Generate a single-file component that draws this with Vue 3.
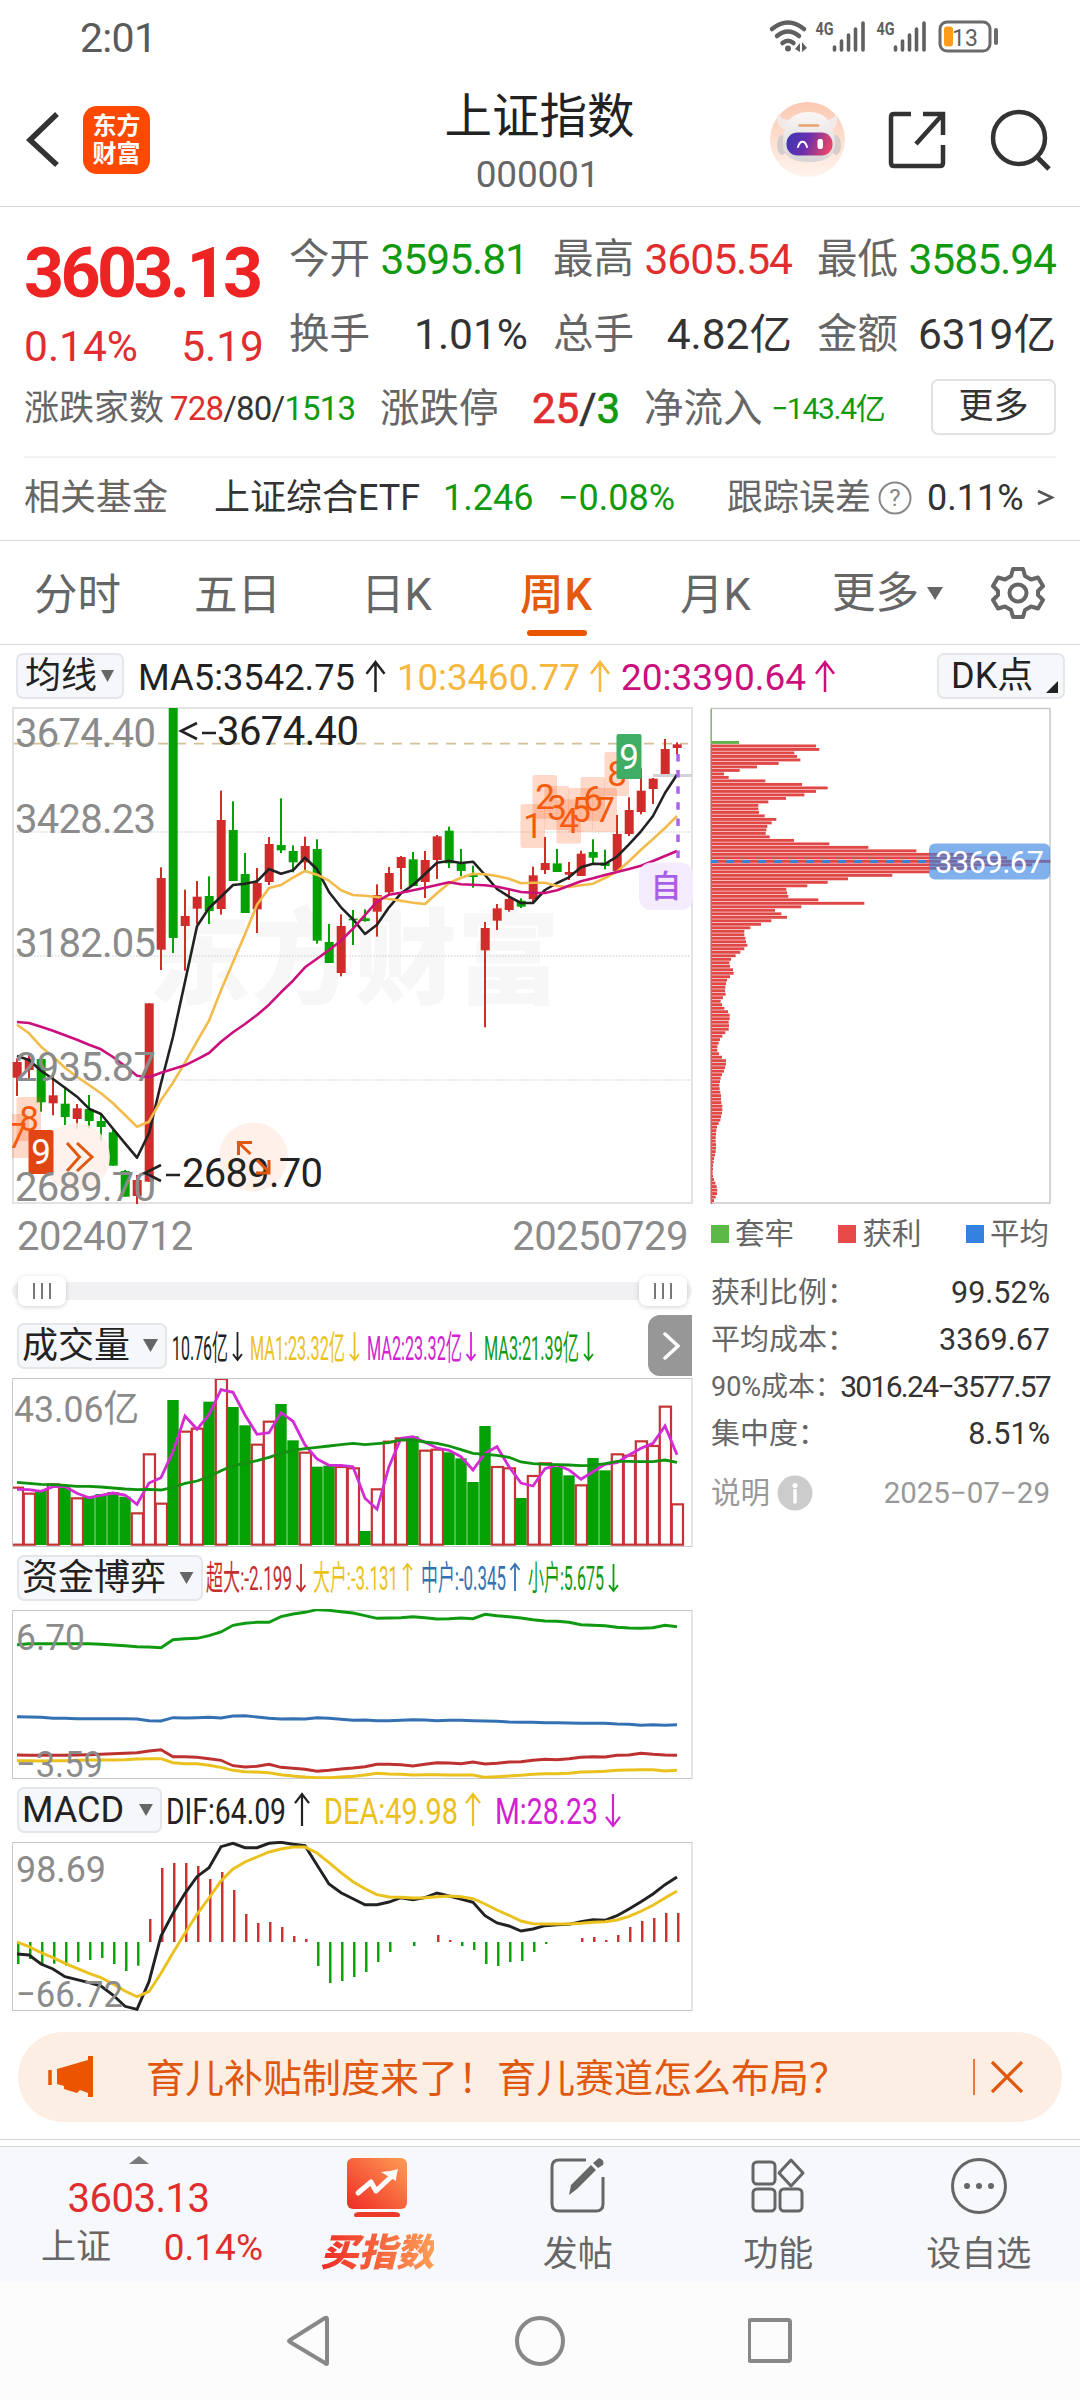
<script setup>
const quotes = [
    { label: "今开", value: "3595.81", tone: "down" },
    { label: "最高", value: "3605.54", tone: "up" },
    { label: "最低", value: "3585.94", tone: "down" },
    { label: "换手", value: "1.01%", tone: "" },
    { label: "总手", value: "4.82亿", tone: "" },
    { label: "金额", value: "6319亿", tone: "" },
]

const tabs = ["分时", "五日", "日K", "周K", "月K"]
const activeTab = "周K"

// one entry per week: color, high, open/close top, open/close bottom, low
const candles = [
    ["r", 1075, 1086, 1133, 1188], ["r", 1065, 1075, 1110, 1140], ["g", 1070, 1077, 1207, 1235], ["r", 1122, 1186, 1210, 1246],
    ["g", 1160, 1211, 1251, 1276], ["r", 1212, 1225, 1257, 1286], ["g", 1185, 1227, 1263, 1286], ["g", 1240, 1263, 1281, 1322],
    ["g", 1290, 1297, 1397, 1397], ["g", 1410, 1413, 1490, 1490], ["r", 1425, 1440, 1488, 1512], ["r", 910, 910, 1445, 1445],
    ["r", 502, 534, 749, 810], ["g", 24, 24, 714, 759], ["r", 569, 648, 678, 812], ["r", 543, 590, 626, 672],
    ["g", 529, 588, 633, 672], ["r", 272, 360, 627, 644], ["g", 304, 390, 543, 543], ["g", 459, 522, 639, 639],
    ["r", 504, 549, 628, 699], ["r", 411, 432, 546, 555], ["g", 295, 435, 451, 459], ["g", 436, 453, 487, 517],
    ["r", 410, 438, 487, 510], ["g", 418, 447, 722, 731], ["g", 672, 726, 789, 789], ["r", 643, 678, 819, 829],
    ["g", 630, 656, 661, 735], ["g", 628, 655, 663, 665], ["r", 553, 585, 635, 710], ["r", 501, 519, 577, 588],
    ["r", 468, 471, 504, 568], ["g", 456, 478, 558, 558], ["r", 453, 480, 546, 594], ["r", 405, 409, 480, 537],
    ["g", 380, 392, 490, 504], ["g", 447, 490, 513, 528], ["g", 497, 525, 531, 563], ["r", 666, 684, 751, 982],
    ["r", 612, 625, 662, 690], ["r", 565, 597, 630, 635], ["g", 595, 602, 620, 624], ["r", 500, 526, 597, 612],
    ["r", 411, 489, 510, 522], ["g", 447, 490, 516, 516], ["r", 486, 516, 524, 540], ["r", 452, 461, 528, 528],
    ["g", 418, 456, 473, 490], ["g", 449, 488, 498, 508], ["r", 345, 402, 513, 513], ["r", 292, 330, 402, 408],
    ["r", 205, 272, 336, 343], ["r", 234, 236, 267, 312], ["r", 117, 147, 222, 222], ["r", 127, 133, 144, 163],
]
const ma5 = [1068, 1080, 1112, 1137, 1163, 1190, 1226, 1242, 1286, 1330, 1373, 1300, 1150, 1010, 845, 679, 624, 590, 555, 551, 544, 507, 521, 511, 473, 508, 576, 622, 658, 702, 674, 622, 580, 555, 522, 488, 483, 489, 485, 525, 567, 590, 609, 609, 570, 549, 532, 502, 491, 492, 470, 433, 394, 348, 279, 224]
const ma10 = [974, 1000, 1040, 1070, 1103, 1130, 1155, 1180, 1210, 1245, 1280, 1265, 1200, 1148, 1088, 1024, 962, 871, 787, 703, 614, 564, 555, 533, 513, 524, 542, 571, 585, 587, 591, 597, 602, 608, 612, 580, 550, 533, 521, 523, 528, 536, 550, 548, 548, 558, 561, 556, 551, 534, 515, 484, 449, 417, 384, 348]
const ma20 = [966, 969, 980, 992, 1006, 1019, 1034, 1048, 1071, 1098, 1127, 1132, 1118, 1107, 1096, 1078, 1059, 1025, 997, 972, 945, 914, 877, 842, 802, 776, 750, 722, 686, 645, 605, 584, 578, 571, 563, 555, 547, 553, 554, 556, 560, 568, 576, 578, 579, 571, 557, 544, 535, 525, 516, 507, 497, 483, 468, 453]

// nine-turn counters above the candles
const turns = [
    { n: 1, x: 520.5, y: 804 }, { n: 2, x: 532.5, y: 775 }, { n: 3, x: 544.5, y: 786 }, { n: 4, x: 556.5, y: 799.5 },
    { n: 5, x: 568.5, y: 788 }, { n: 6, x: 580.5, y: 777 }, { n: 7, x: 592.5, y: 788 }, { n: 8, x: 604.5, y: 752 },
    { n: 7, x: 4.5, y: 1114 }, { n: 8, x: 16.5, y: 1097 },
]

const volumes = [
    ["r", 860], ["r", 878], ["g", 870], ["r", 850], ["g", 862], ["r", 892], ["g", 890], ["g", 882], ["g", 876], ["g", 890],
    ["r", 937], ["r", 760], ["r", 908], ["g", 600], ["r", 692], ["r", 683], ["g", 605], ["r", 534], ["g", 621], ["g", 676],
    ["r", 731], ["r", 662], ["g", 612], ["g", 721], ["r", 755], ["g", 800], ["g", 797], ["r", 798], ["r", 802], ["g", 993],
    ["r", 865], ["r", 722], ["r", 712], ["g", 709], ["r", 749], ["r", 746], ["g", 757], ["g", 775], ["g", 846], ["g", 678],
    ["r", 798], ["r", 802], ["g", 894], ["r", 825], ["r", 787], ["g", 801], ["g", 826], ["r", 853], ["g", 774], ["g", 811],
    ["r", 760], ["r", 764], ["r", 721], ["r", 735], ["r", 617], ["r", 910],
]
const volFast = [868, 869, 874, 860, 860, 880, 893, 886, 879, 885, 913, 849, 833, 755, 648, 688, 644, 569, 577, 645, 703, 698, 638, 664, 735, 777, 796, 796, 800, 895, 928, 800, 715, 710, 727, 744, 751, 770, 810, 760, 740, 800, 849, 858, 806, 795, 810, 838, 815, 793, 788, 765, 745, 730, 678, 764]
const volSlow = [847, 850, 853, 854, 856, 859, 859, 861, 864, 867, 869, 868, 870, 862, 850, 843, 830, 812, 797, 790, 782, 772, 760, 751, 746, 742, 738, 734, 730, 734, 731, 728, 720, 720, 726, 730, 738, 749, 760, 763, 766, 772, 786, 791, 793, 794, 795, 797, 796, 791, 784, 784, 785, 785, 780, 787]

const fundLines = [
    { color: "#0f9a12", data: [314, 311, 311, 311, 311, 311, 311, 313, 315, 317, 320, 321, 323, 299, 296, 295, 287, 276, 256, 250, 247, 247, 230, 222, 217, 209, 211, 215, 219, 227, 235, 234, 233, 230, 233, 237, 236, 234, 236, 223, 227, 230, 234, 239, 243, 244, 247, 254, 256, 257, 262, 264, 265, 263, 256, 260] },
    { color: "#3471b3", data: [530, 531, 532, 535, 535, 536, 536, 536, 536, 536, 537, 542, 543, 533, 534, 533, 532, 534, 528, 527, 531, 535, 537, 536, 537, 533, 535, 538, 541, 540, 542, 542, 541, 539, 540, 542, 541, 541, 542, 543, 544, 546, 547, 547, 548, 548, 549, 550, 550, 550, 552, 553, 556, 554, 556, 554] },
    { color: "#bd3130", data: [645, 646, 646, 646, 646, 645, 644, 643, 641, 640, 638, 633, 629, 650, 650, 652, 656, 661, 677, 681, 679, 673, 682, 685, 688, 694, 691, 687, 684, 680, 673, 673, 674, 678, 673, 668, 669, 671, 666, 672, 670, 666, 665, 661, 658, 659, 656, 652, 650, 651, 646, 645, 640, 643, 645, 646] },
    { color: "#ebc11d", data: [662, 662, 663, 662, 662, 661, 660, 660, 660, 659, 657, 656, 656, 668, 671, 671, 676, 682, 691, 695, 696, 698, 704, 708, 711, 713, 713, 711, 709, 705, 700, 702, 703, 705, 704, 704, 705, 705, 705, 712, 710, 708, 706, 703, 701, 701, 700, 696, 695, 694, 691, 690, 689, 689, 693, 691] },
]

const macdZero = 486
const macd = [552, 537, 552, 551, 557, 546, 540, 534, 552, 573, 557, 417, 264, 249, 249, 258, 297, 276, 330, 402, 429, 426, 441, 468, 477, 558, 609, 603, 591, 576, 546, 516, 486, 498, 486, 465, 480, 498, 510, 552, 558, 546, 543, 516, 492, 486, 486, 474, 471, 480, 465, 441, 423, 414, 399, 399]
const dif = [522, 525, 552, 567, 590, 599, 608, 618, 645, 679, 688, 605, 468, 400, 340, 290, 263, 200, 190, 203, 203, 190, 187, 193, 197, 255, 312, 338, 356, 374, 374, 366, 353, 359, 353, 339, 348, 357, 367, 407, 429, 438, 453, 447, 437, 434, 433, 425, 419, 421, 407, 387, 365, 342, 314, 291]
const dea = [486, 500, 518, 533, 550, 565, 580, 593, 612, 633, 650, 635, 580, 518, 460, 403, 354, 303, 267, 246, 231, 216, 207, 201, 201, 219, 248, 278, 305, 326, 344, 351, 352, 354, 353, 350, 348, 350, 356, 372, 390, 406, 423, 431, 432, 432, 432, 430, 427, 425, 420, 409, 394, 376, 354, 333]

// chip distribution, top price first
const chips = [
    146, 377, 387, 312, 320, 330, 265, 200, 148, 101, 115, 225, 335, 412, 377, 342, 287, 234, 204, 204, 206, 223, 258, 244, 231, 228, 226, 238,
    311, 417, 534, 678, 858, 950, 1080, 1025, 860, 717, 606, 473, 412, 351, 288, 290, 294, 384, 522, 333, 254, 273, 290, 243, 212, 180, 162, 162,
    165, 167, 171, 162, 150, 136, 122, 117, 119, 128, 130, 119, 110, 107, 105, 104, 106, 98, 91, 95, 102, 113, 118, 118, 115, 116, 115, 105, 96,
    89, 85, 81, 81, 86, 95, 107, 107, 104, 101, 95, 91, 89, 87, 88, 90, 92, 92, 93, 96, 96, 95, 92, 90, 85, 80, 78, 77, 76, 76, 77, 77, 76, 74,
    71, 70, 68, 68, 67, 68, 71, 75, 79, 81, 80, 76, 71, 66,
]

const maLegend = [
    { text: "MA5:3542.75", x: 138, w: 217, arrow: 375.5, up: true, color: "#222" },
    { text: "10:3460.77", x: 397, w: 183, arrow: 600, up: true, color: "#f5b73c" },
    { text: "20:3390.64", x: 621, w: 185, arrow: 825, up: true, color: "#cb0f7c" },
]
const volLegend = [
    { text: "10.76亿", x: 172, w: 56, arrow: 237.5, color: "#222" },
    { text: "MA1:23.32亿", x: 250, w: 95, arrow: 354.5, color: "#ebc11d" },
    { text: "MA2:23.32亿", x: 367, w: 95, arrow: 471, color: "#d222d2" },
    { text: "MA3:21.39亿", x: 484, w: 95, arrow: 588.5, color: "#0f9a12" },
]
const fundLegend = [
    { text: "超大:-2.199", x: 206, w: 86, arrow: 301, color: "#c52f2f" },
    { text: "大户:-3.131", x: 313, w: 85, arrow: 407.5, up: true, color: "#ebc11d" },
    { text: "中户:-0.345", x: 421, w: 85, arrow: 515, up: true, color: "#3471b3" },
    { text: "小户:5.675", x: 528, w: 76, arrow: 613.5, color: "#0f9a12" },
]
const macdLegend = [
    { text: "DIF:64.09", x: 166, w: 120, arrow: 302, up: true, color: "#222" },
    { text: "DEA:49.98", x: 324, w: 134, arrow: 473, up: true, color: "#ebc11d" },
    { text: "M:28.23", x: 495, w: 103, arrow: 613, color: "#d222d2" },
]

const stats = [
    { label: "获利比例：", value: "99.52%" },
    { label: "平均成本：", value: "3369.67" },
    { label: "90%成本：", value: "3016.24−3577.57", tight: true },
    { label: "集中度：", value: "8.51%" },
]

const px = (i) => 17 + 12 * i
const line = (data, base) => data.map((v, i) => `${px(i)},${(base + v / 3).toFixed(1)}`).join(" ")
const fill = (c) => c === "r" ? "#cf2d2c" : "#03a103"
const chipY = (i) => 741 + i * 3.497
const arrow = (item, top, bottom, spread) => {
    const tip = item.up ? top : bottom
    const back = item.up ? tip + spread * 1.3 : tip - spread * 1.3
    return `M${item.arrow} ${top}V${bottom}M${item.arrow - spread} ${back}L${item.arrow} ${tip}L${item.arrow + spread} ${back}`
}
</script>

<template>
    <div class="page">
        <div class="status">
            <span class="clock">2:01</span>
            <svg class="status-icons" width="232" height="36" viewBox="768 19 232 36">
                <g fill="none" stroke="#606060" stroke-width="4.5" stroke-linecap="round">
                    <path d="M772 29Q788 16 804 29" />
                    <path d="M777 36Q788 27 799 36" />
                    <path d="M782.500 43Q788 38.500 793.500 43" />
                </g>
                <circle cx="788" cy="48.500" r="3" fill="#606060" />
                <path d="M795 49L800 43V52ZM802 42L807 48L802 52Z" fill="#606060" />
                <text x="815.500" y="34.500" class="net" textLength="18" lengthAdjust="spacingAndGlyphs">4G</text>
                <text x="876.500" y="34.500" class="net" textLength="18" lengthAdjust="spacingAndGlyphs">4G</text>
                <path d="M834.500 47V50M841.500 41V50M848.500 35V50M855.500 29V50M863 23V50M895.500 47V50M902.500 41V50M909.500 35V50M916.500 29V50M924 23V50" stroke="#606060" stroke-width="3.600" stroke-linecap="round" />
                <rect x="940" y="22" width="50" height="29" rx="7" fill="none" stroke="#6b6b6b" stroke-width="3" />
                <rect x="944" y="26.500" width="9" height="20" rx="3" fill="#ff9d1b" />
                <path d="M996 30V43" stroke="#6b6b6b" stroke-width="4" stroke-linecap="round" />
                <text x="952" y="45.500" class="battery">13</text>
            </svg>
        </div>

        <header class="header">
            <div class="header-left">
                <svg width="36" height="60" viewBox="0 0 36 60"><path d="M32 4L5 30L32 55" fill="none" stroke="#333" stroke-width="5.500" /></svg>
                <div class="logo"><span>东方</span><span>财富</span></div>
            </div>
            <div class="title">
                <h1>上证指数</h1>
                <p>000001</p>
            </div>
            <div class="header-right">
                <svg width="76" height="76" viewBox="0 0 76 76">
                    <defs>
                        <linearGradient id="halo" x1="0" y1="0" x2="0" y2="1"><stop offset="0" stop-color="#fbc9b2" /><stop offset="1" stop-color="#fff4ee" /></linearGradient>
                        <linearGradient id="visor" x1="0" y1="0" x2="1" y2="0.200"><stop offset="0" stop-color="#3a37b0" /><stop offset=".5" stop-color="#6a2fae" /><stop offset="1" stop-color="#e0446c" /></linearGradient>
                        <linearGradient id="shell" x1="0" y1="0" x2="0" y2="1"><stop offset="0" stop-color="#fbf7f6" /><stop offset="1" stop-color="#d8d4d6" /></linearGradient>
                    </defs>
                    <circle cx="37.500" cy="37.500" r="37.500" fill="url(#halo)" />
                    <ellipse cx="12" cy="43" rx="5" ry="10" fill="#d6cdcb" />
                    <ellipse cx="66" cy="43" rx="5" ry="10" fill="#d6cdcb" />
                    <path d="M15 28Q4 22 8 12Q12 18 21 18ZM62 28Q70 22 66 12Q63 18 55 18Z" fill="#f3e9e6" />
                    <path d="M13 42C13 22 20 10 39 10S64 24 65 42C65 54 55 60 40 60S13 56 13 42Z" fill="url(#shell)" />
                    <rect x="16.500" y="30.500" width="46" height="23" rx="11" fill="url(#visor)" />
                    <path d="M28 45C30 38 35 38 37 45" fill="none" stroke="#fff" stroke-width="2" stroke-linecap="round" />
                    <rect x="47.500" y="37" width="5.500" height="10" rx="2.200" fill="#fff" />
                    <path d="M29.500 23.500H48" stroke="#e8a06a" stroke-width="2.500" stroke-linecap="round" />
                </svg>
                <svg width="60" height="60" viewBox="0 0 60 60"><path d="M24 4H7Q4 4 4 7V53Q4 56 7 56H53Q56 56 56 53V35M36 4H56V25M56 4L29 34" fill="none" stroke="#333" stroke-width="4.500" /></svg>
                <svg width="62" height="62" viewBox="0 0 62 62"><circle cx="29" cy="29" r="26" fill="none" stroke="#333" stroke-width="4.500" /><path d="M47 48L59 60" stroke="#333" stroke-width="5" /></svg>
            </div>
        </header>

        <section class="overview">
            <div class="price-row">
                <div class="price">
                    <strong>3603.13</strong>
                    <div class="change"><span>0.14%</span><span>5.19</span></div>
                </div>
                <div class="quotes">
                    <div v-for="q in quotes" :key="q.label" class="quote">
                        <span>{{ q.label }}</span>
                        <b :class="q.tone">{{ q.value }}</b>
                    </div>
                </div>
            </div>
            <div class="breadth">
                <span class="breadth-label">涨跌家数</span>
                <span class="counts"><i class="up">728</i>/80/<i class="down">1513</i></span>
                <span class="limit-label">涨跌停</span>
                <span class="limits"><i class="up">25</i>/<i class="down">3</i></span>
                <span class="flow-label">净流入</span>
                <span class="flow down">−143.4亿</span>
                <button class="more">更多</button>
            </div>
            <div class="fund">
                <span class="fund-label">相关基金</span>
                <span class="fund-name">上证综合ETF</span>
                <span class="fund-price down">1.246</span>
                <span class="fund-change down">−0.08%</span>
                <span class="fund-error">跟踪误差</span>
                <svg width="34" height="34" viewBox="0 0 34 34"><circle cx="17" cy="17" r="15.500" fill="none" stroke="#888" stroke-width="2" /><text x="17" y="25" class="help" text-anchor="middle">?</text></svg>
                <span class="fund-rate">0.11%</span>
                <svg class="fund-go" width="18" height="18" viewBox="0 0 18 18"><path d="M1 2L15 8.500L1 15" fill="none" stroke="#555" stroke-width="2.500" /></svg>
            </div>
        </section>

        <nav class="tabs">
            <span v-for="t in tabs" :key="t" class="tab" :class="{ active: t === activeTab }">{{ t }}</span>
            <span class="tab tab-more">更多<svg width="16" height="13" viewBox="0 0 16 13"><path d="M0 0H16L8 13Z" fill="#666" /></svg></span>
            <svg class="gear" width="54" height="54" viewBox="0 0 54 54">
                <path d="M22 3H32L34 10L40 13.500L47 11.500L52 20L47 25V29L52 34L47 42.500L40 40.500L34 44L32 51H22L20 44L14 40.500L7 42.500L2 34L7 29V25L2 20L7 11.500L14 13.500L20 10Z" fill="none" stroke="#666" stroke-width="4" stroke-linejoin="round" />
                <circle cx="27" cy="27" r="8.500" fill="none" stroke="#666" stroke-width="4" />
            </svg>
        </nav>

        <div class="ma-row">
            <button class="pick pick-ma">均线<svg width="13" height="12" viewBox="0 0 13 12"><path d="M0 0H13L6.500 12Z" fill="#666" /></svg></button>
            <svg width="813" height="62" viewBox="124 0 813 62">
                <g v-for="l in maLegend" :key="l.text">
                    <text :x="l.x" y="45" :fill="l.color" :textLength="l.w" lengthAdjust="spacingAndGlyphs" class="legend-37">{{ l.text }}</text>
                    <path :d="arrow(l, 17, 47, 9)" :stroke="l.color" fill="none" stroke-width="2.500" />
                </g>
            </svg>
            <button class="pick pick-dk">DK点<svg width="12" height="12" viewBox="0 0 12 12"><path d="M12 0V12H0Z" fill="#222" /></svg></button>
        </div>

        <main class="board">
            <div class="charts">
                <svg class="chart" width="682" height="497" viewBox="12 707 682 497">
                    <text x="148" y="996" class="watermark" textLength="412" lengthAdjust="spacingAndGlyphs">东方财富</text>
                    <path d="M13 832H692M13 956H692M13 1080H692" stroke="#dcdcdc" stroke-width="1.500" stroke-dasharray="1.500 1.500" />
                    <rect x="13" y="708" width="679" height="495" fill="none" stroke="#e3e3e3" stroke-width="2" />
                    <path d="M13 743.700H688" stroke="#d3c096" stroke-width="1.700" stroke-dasharray="10 8" stroke-dashoffset="-1" />
                    <path d="M653 775.500H692" stroke="#cfd3d8" stroke-width="3" />
                    <g v-for="(c, i) in candles" :key="i" :fill="fill(c[0])">
                        <rect :x="px(i) - 1" :y="700 + c[1] / 3" width="2" :height="(c[4] - c[1]) / 3" />
                        <rect :x="px(i) - 4.300" :y="700 + c[2] / 3" width="9" :height="(c[3] - c[2]) / 3" />
                    </g>
                    <g class="turn">
                        <g v-for="(t, i) in turns" :key="i">
                            <rect :x="t.x" :y="t.y" width="24.500" height="44" rx="2" fill="#fa6a2c" fill-opacity=".26" />
                            <text :x="t.x + 12.500" :y="t.y + 33.500" fill="#f45a0c" text-anchor="middle">{{ t.n }}</text>
                        </g>
                        <rect x="616.500" y="734" width="25" height="45" rx="2" fill="#3fae64" />
                        <text x="629" y="769" fill="#fff" text-anchor="middle">9</text>
                    </g>
                    <circle cx="76" cy="1157" r="34" fill="#fff0e9" fill-opacity=".85" />
                    <circle cx="253.500" cy="1157" r="34.500" fill="#fff0e9" />
                    <g class="turn">
                        <rect x="28.500" y="1130" width="25" height="44" rx="2" fill="#e14514" />
                        <text x="41" y="1164" fill="#fff" text-anchor="middle">9</text>
                    </g>
                    <g fill="none" stroke-width="2.600" stroke-linejoin="round">
                        <polyline :points="line(ma5, 700)" stroke="#222" />
                        <polyline :points="line(ma10, 700)" stroke="#f3bb4b" />
                        <polyline :points="line(ma20, 700)" stroke="#cb0f7c" />
                    </g>
                    <g class="axis">
                        <text x="15" y="746.500" textLength="141">3674.40</text>
                        <text x="15" y="832.500" textLength="141">3428.23</text>
                        <text x="15" y="957" textLength="141">3182.05</text>
                        <text x="15" y="1081" textLength="141">2935.87</text>
                        <text x="15" y="1201" textLength="141">2689.70</text>
                    </g>
                    <path d="M197 723L181 731L197 739M202 733H216M161 1165L145 1173L161 1181M166 1175H180" fill="none" stroke="#222" stroke-width="2.600" />
                    <text x="217" y="745" class="mark" textLength="142">3674.40</text>
                    <text x="182" y="1187" class="mark" textLength="141">2689.70</text>
                    <path d="M67 1143L79.500 1157L67 1171M77 1143L92 1157L77 1171M250.500 1154L238.500 1142.500M238.500 1155V1142.500H252M257 1160L269 1172M269 1160V1173H256" fill="none" stroke="#e0580f" stroke-width="3" />
                    <path d="M678 754V858" stroke="#ae62ea" stroke-width="3.500" stroke-dasharray="7.500 8.600" />
                    <rect x="639" y="862.500" width="54" height="47.500" rx="12" fill="#f3e9fd" fill-opacity=".9" />
                    <text x="666" y="897" class="auto" text-anchor="middle">自</text>
                </svg>

                <div class="dates"><span>20240712</span><span>20250729</span></div>

                <div class="slider">
                    <div class="handle"><i></i><i></i><i></i></div>
                    <div class="handle"><i></i><i></i><i></i></div>
                </div>

                <div class="row vol-row">
                    <button class="pick pick-vol">成交量<svg width="15" height="13" viewBox="0 0 15 13"><path d="M0 0H15L7.500 13Z" fill="#666" /></svg></button>
                    <svg width="481" height="63" viewBox="167 0 481 63">
                        <g v-for="l in volLegend" :key="l.text">
                            <text :x="l.x" y="45.500" :fill="l.color" :textLength="l.w" lengthAdjust="spacingAndGlyphs" class="legend-33">{{ l.text }}</text>
                            <path :d="arrow(l, 18, 46, 4.500)" :stroke="l.color" fill="none" stroke-width="1.800" />
                        </g>
                    </svg>
                    <button class="expand"><svg width="20" height="30" viewBox="0 0 20 30"><path d="M5 3L18 15L5 27" fill="none" stroke="#fff" stroke-width="3.500" stroke-linecap="round" /></svg></button>
                </div>
                <svg class="chart" width="682" height="170" viewBox="12 1377 682 170">
                    <text x="14" y="1422" class="sub" textLength="125" lengthAdjust="spacingAndGlyphs">43.06亿</text>
                    <svg class="clip" x="12" y="1378" width="680" height="169" viewBox="12 1378 680 169">
                        <template v-for="(v, i) in volumes" :key="i">
                            <rect v-if="v[0] === 'g'" :x="px(i) - 5.700" :y="1200 + v[1] / 3" width="11.400" :height="(1035 - v[1]) / 3" fill="#03a103" />
                            <rect v-else :x="px(i) - 5.200" :y="1201 + v[1] / 3" width="11.200" :height="(1031 - v[1]) / 3" fill="#fff" stroke="#c53434" stroke-width="2.200" />
                        </template>
                    </svg>
                    <polyline :points="line(volFast, 1200)" fill="none" stroke="#d42bd4" stroke-width="2.800" />
                    <polyline :points="line(volSlow, 1200)" fill="none" stroke="#0f930f" stroke-width="2.800" />
                    <rect x="12.500" y="1378.500" width="679.500" height="168" fill="none" stroke="#c9c9c9" />
                </svg>

                <div class="row">
                    <button class="pick pick-fund">资金博弈<svg width="15" height="12" viewBox="0 0 15 13"><path d="M0 0H15L7.500 13Z" fill="#666" /></svg></button>
                    <svg width="479" height="62" viewBox="203 0 479 62">
                        <g v-for="l in fundLegend" :key="l.text">
                            <text :x="l.x" y="43" :fill="l.color" :textLength="l.w" lengthAdjust="spacingAndGlyphs" class="legend-33">{{ l.text }}</text>
                            <path :d="arrow(l, 17, 44, 4.500)" :stroke="l.color" fill="none" stroke-width="1.800" />
                        </g>
                    </svg>
                </div>
                <svg class="chart" width="682" height="170" viewBox="12 1609 682 170">
                    <rect x="12.500" y="1610.500" width="679.500" height="168" fill="none" stroke="#c9c9c9" />
                    <polyline v-for="l in fundLines" :key="l.color" :points="line(l.data, 1540)" fill="none" :stroke="l.color" stroke-width="2.900" />
                    <text x="16" y="1650" class="sub" textLength="69" lengthAdjust="spacingAndGlyphs">6.70</text>
                    <text x="16" y="1777" class="sub" textLength="87" lengthAdjust="spacingAndGlyphs">−3.59</text>
                </svg>

                <div class="row">
                    <button class="pick pick-macd">MACD<svg width="14" height="12" viewBox="0 0 15 13"><path d="M0 0H15L7.500 13Z" fill="#666" /></svg></button>
                    <svg width="520" height="62" viewBox="162 0 520 62">
                        <g v-for="l in macdLegend" :key="l.text">
                            <text :x="l.x" y="45" :fill="l.color" :textLength="l.w" lengthAdjust="spacingAndGlyphs" class="legend-37">{{ l.text }}</text>
                            <path :d="arrow(l, 15, 47, 7)" :stroke="l.color" fill="none" stroke-width="2.200" />
                        </g>
                    </svg>
                </div>
                <svg class="chart" width="682" height="170" viewBox="12 1841 682 170">
                    <rect x="12.500" y="1842.500" width="679.500" height="168" fill="none" stroke="#c9c9c9" />
                    <rect v-for="(v, i) in macd" :key="i" :x="px(i)" :y="1780 + Math.min(v, macdZero) / 3" width="2.500" :height="Math.abs(v - macdZero) / 3" :fill="v < macdZero ? '#c93333' : '#10a010'" />
                    <polyline :points="line(dif, 1780)" fill="none" stroke="#222" stroke-width="2.900" />
                    <polyline :points="line(dea, 1780)" fill="none" stroke="#ebc11d" stroke-width="2.900" />
                    <text x="16" y="1882" class="sub" textLength="90" lengthAdjust="spacingAndGlyphs">98.69</text>
                    <text x="16" y="2007" class="sub" textLength="107" lengthAdjust="spacingAndGlyphs">−66.72</text>
                </svg>
            </div>

            <aside class="chips">
                <svg class="chart" width="342" height="497" viewBox="710 707 342 497">
                    <rect x="711" y="708.500" width="339" height="494.500" fill="none" stroke="#c8c8c8" stroke-width="1.500" />
                    <path d="M711.300 709V741" stroke="#7fb56a" stroke-width="1.200" />
                    <rect v-for="(c, i) in chips" :key="i" x="711" :y="chipY(i)" :width="(c - 62) / 3" height="2.900" :fill="i ? '#e04848' : '#62b24c'" />
                    <path d="M711.300 744V1203" stroke="#d86060" stroke-width="1.200" />
                    <path d="M711 861.500H929" stroke="#3f7fd6" stroke-width="3" stroke-dasharray="8 8" stroke-dashoffset="1" />
                    <rect x="929" y="843.500" width="121" height="36" rx="6" fill="#3481e0" fill-opacity=".62" />
                    <text x="935" y="873" class="avg" textLength="109">3369.67</text>
                </svg>
                <div class="keys">
                    <span><i class="sq green"></i>套牢</span>
                    <span><i class="sq red"></i>获利</span>
                    <span><i class="sq blue"></i>平均</span>
                </div>
                <div v-for="s in stats" :key="s.label" class="stat" :class="{ tight: s.tight }">
                    <span>{{ s.label }}</span><b>{{ s.value }}</b>
                </div>
                <div class="note">
                    <span>说明</span>
                    <svg width="36" height="36" viewBox="0 0 36 36"><circle cx="18" cy="18" r="17.500" fill="#ccc" /><circle cx="18" cy="10.500" r="2.500" fill="#fff" /><path d="M18 15.500V27" stroke="#fff" stroke-width="3.500" stroke-linecap="round" /></svg>
                    <time>2025−07−29</time>
                </div>
            </aside>
        </main>

        <div class="banner">
            <svg width="46" height="42" viewBox="0 0 46 42"><path d="M2 14V29" stroke="#eb5500" stroke-width="3.500" /><path d="M9 13L40 4V0H45V41H40V37L32 34L29 37L16 33V30L9 28Z" fill="#eb5500" /></svg>
            <p>育儿补贴制度来了！育儿赛道怎么布局？</p>
            <i></i>
            <svg width="34" height="34" viewBox="0 0 34 34"><path d="M2 2L32 32M32 2L2 32" stroke="#e0580f" stroke-width="3.200" /></svg>
        </div>

        <footer class="footer">
            <div class="index">
                <svg width="20" height="8" viewBox="0 0 20 8"><path d="M10 0L20 8H0Z" fill="#7b7b7e" /></svg>
                <strong>3603.13</strong>
                <div><span>上证</span><em>0.14%</em></div>
            </div>
            <div class="action buy">
                <svg width="62" height="62" viewBox="0 0 62 62">
                    <defs><linearGradient id="buy" x1="0" y1="1" x2="1" y2="0"><stop offset="0" stop-color="#ee2b25" /><stop offset="1" stop-color="#ff9d55" /></linearGradient></defs>
                    <rect x="1" y="3" width="60" height="51" rx="6" fill="url(#buy)" />
                    <path d="M8 60Q8 57 14 57H48Q54 57 54 60Q54 63 48 63H14Q8 63 8 60Z" fill="#ec3a2b" />
                    <path d="M12 38L25 27L30 36L47 20" fill="none" stroke="#fff" stroke-width="5" stroke-linejoin="round" stroke-linecap="round" />
                    <path d="M35 17Q43 17 52 14Q50 21 50 26Z" fill="#fff" />
                </svg>
                <span>买指数</span>
            </div>
            <div class="action">
                <svg width="58" height="58" viewBox="0 0 58 58"><path d="M37 3H10Q3 3 3 10V47Q3 54 10 54H47Q54 54 54 47V20" fill="none" stroke="#666" stroke-width="3" /><path d="M20 38L22 28L42 8L47 13L28 32ZM44 6L50 1Q56 3 54 8L49 11Z" fill="#666" /></svg>
                <span>发帖</span>
            </div>
            <div class="action">
                <svg width="56" height="58" viewBox="0 0 56 58"><g fill="none" stroke="#666" stroke-width="3" stroke-linejoin="round"><rect x="3" y="5" width="22" height="22" rx="4" /><rect x="3" y="32" width="22" height="22" rx="4" /><rect x="30" y="32" width="22" height="22" rx="4" /><path d="M41 3L53 16L41 29L29 16Z" /></g></svg>
                <span>功能</span>
            </div>
            <div class="action">
                <svg width="58" height="58" viewBox="0 0 58 58"><circle cx="29" cy="29" r="26.500" fill="none" stroke="#666" stroke-width="3" /><circle cx="17" cy="29" r="3" fill="#666" /><circle cx="29" cy="29" r="3" fill="#666" /><circle cx="41" cy="29" r="3" fill="#666" /></svg>
                <span>设自选</span>
            </div>
        </footer>

        <div class="system">
            <svg width="46" height="54" viewBox="0 0 46 54"><path d="M41 5V49Q41 51 39 49L4 28Q2 27 4 26L39 4Q41 3 41 5Z" fill="none" stroke="#888" stroke-width="4" stroke-linejoin="round" /></svg>
            <svg width="54" height="54" viewBox="0 0 54 54"><circle cx="27" cy="27" r="23" fill="none" stroke="#888" stroke-width="4" /></svg>
            <svg width="48" height="54" viewBox="4 0 48 54"><rect x="5" y="6" width="41" height="41" rx="2" fill="none" stroke="#888" stroke-width="4" /></svg>
        </div>
    </div>
</template>

<style>
body {
    margin: 0;
    background: #fff;
}
</style>

<style scoped>
.page {
    width: 1080px;
    height: 2400px;
    overflow: hidden;
    background: #fff;
    color: #333;
    font-family: Roboto, "Noto Sans CJK SC", sans-serif;
    display: flex;
    flex-direction: column;
}

.page > * {
    flex: none;
    box-sizing: border-box;
}

svg {
    display: block;
    flex: none;
}

button {
    font-family: inherit;
    padding: 0;
    box-sizing: border-box;
}

i,
em {
    font-style: normal;
}

b {
    font-weight: 400;
}

.up {
    color: #e02e2e;
}

.down {
    color: #109a10;
}

/* status bar */
.status {
    height: 74px;
    padding: 0 80px 0 80px;
    display: flex;
    justify-content: space-between;
}

.clock {
    font-size: 41px;
    line-height: 77px;
    letter-spacing: -.7px;
    color: #5a5a5a;
}

.status-icons {
    margin-top: 19px;
    overflow: visible;
}

.net {
    font-size: 19px;
    font-weight: 700;
    fill: #606060;
}

.battery {
    font-size: 23px;
    fill: #606060;
}

/* header */
.header {
    height: 133px;
    padding: 0 28px 0 25px;
    border-bottom: 1px solid #d3d3d3;
    display: grid;
    grid-template-columns: 1fr 200px 1fr;
}

.header-left {
    display: flex;
    align-items: center;
    gap: 22px;
}

.logo {
    width: 67px;
    height: 68px;
    border-radius: 14px;
    background: #ff4800;
    color: #fff;
    font-size: 24px;
    font-weight: 700;
    line-height: 28px;
    display: flex;
    flex-direction: column;
    align-items: center;
    justify-content: center;
}

.title {
    text-align: center;
    margin-left: -8px;
    margin-right: -10px;
}

h1 {
    margin: 15px 0 0;
    font-size: 47.5px;
    font-weight: 400;
    line-height: 56px;
    color: #222;
}

.title p {
    margin: 9px 0 0 -4px;
    font-size: 37px;
    line-height: 42px;
    letter-spacing: -.2px;
    color: #666;
}

.header-right {
    display: flex;
    justify-content: flex-end;
    align-items: center;
    gap: 43px;
}

.header-right svg:first-child {
    margin-right: -2px;
}

/* quote overview */
.overview {
    height: 334px;
    padding: 0 24px;
    border-bottom: 1px solid #d8d8d8;
}

.price-row {
    display: flex;
    height: 165px;
}

.price {
    width: 265px;
    flex: none;
    color: #e02e2e;
}

.price strong {
    display: block;
    margin-top: 28px;
    font-size: 70px;
    line-height: 76px;
    letter-spacing: -3.7px;
    color: #ee2424;
}

.change {
    display: flex;
    justify-content: space-between;
    width: 240px;
    margin-top: 12px;
    font-size: 42.5px;
    line-height: 48px;
}

.quotes {
    flex: 1;
    display: grid;
    grid-template-columns: repeat(3, 1fr);
    grid-auto-rows: 75px;
    column-gap: 25px;
    margin-top: 15px;
}

.quote {
    display: flex;
    justify-content: space-between;
    line-height: 75px;
    white-space: nowrap;
}

.quote span {
    font-size: 40.5px;
    color: #666;
}

.quote b {
    font-size: 42.5px;
    letter-spacing: -1px;
}

.quote:nth-child(n + 4) b {
    letter-spacing: 0;
}

.breadth {
    display: flex;
    align-items: center;
    height: 70px;
    white-space: nowrap;
    line-height: 56px;
    padding-bottom: 14px;
    border-bottom: 2px solid #f3f3f3;
}

.breadth-label {
    width: 146px;
    padding-top: 3px;
    font-size: 35px;
    color: #666;
}

.counts {
    width: 210px;
    padding-top: 3px;
    font-size: 33px;
    letter-spacing: -.8px;
}

.limit-label {
    width: 152px;
    padding-top: 3px;
    font-size: 39.5px;
    color: #666;
}

.limits {
    width: 112px;
    padding-top: 3px;
    font-size: 42px;
    -webkit-text-stroke: .7px currentColor;
}

.flow-label {
    width: 127px;
    padding-top: 3px;
    font-size: 39.5px;
    color: #666;
}

.flow {
    padding-top: 3px;
    font-size: 30px;
    letter-spacing: -1.3px;
}

.more {
    width: 125px;
    height: 56px;
    margin-left: auto;
    border: 2px solid #e2e2e2;
    border-radius: 7px;
    background: #fff;
    color: #333;
    font-size: 35px;
    line-height: 46px;
}

.fund {
    display: flex;
    align-items: center;
    height: 80px;
    font-size: 36px;
    line-height: 50px;
    white-space: nowrap;
}

.fund-label,
.fund-error {
    color: #666;
}

.fund-label {
    width: 190px;
}

.fund-name {
    width: 229px;
}

.fund-price {
    width: 115px;
}

.fund-change {
    width: 169px;
}

.fund-error {
    width: 151px;
}

.help {
    font-size: 24px;
    fill: #888;
}

.fund-rate {
    margin-left: 15px;
    width: 110px;
}

/* period tabs */
.tabs {
    height: 104px;
    border-bottom: 1px solid #d8d8d8;
    display: flex;
    padding-left: 34px;
    position: relative;
    color: #666;
}

.tab {
    width: 160px;
    font-size: 43.5px;
    line-height: 109px;
    white-space: nowrap;
}

.tab:nth-child(3) {
    margin-left: 7px;
    width: 159px;
}

.tab:nth-child(5) {
    width: 152px;
}

.tab.active {
    color: #e35a0e;
    font-weight: 500;
    letter-spacing: 1px;
    position: relative;
}

.tab.active::after {
    content: "";
    position: absolute;
    left: 7px;
    top: 89px;
    width: 60px;
    height: 6px;
    border-radius: 3px;
    background: #ea5504;
}

.tab-more {
    display: flex;
    align-items: center;
    gap: 8px;
    width: 159px;
    padding-top: 2px;
    box-sizing: border-box;
}

.gear {
    margin-top: 25px;
}

/* indicator pickers */
.ma-row,
.row {
    display: flex;
    align-items: center;
    height: 62px;
}

.ma-row {
    padding-left: 16px;
}

.pick {
    height: 46px;
    border: 2px solid #e4e6ea;
    border-radius: 7px;
    background: #f6f7fa;
    color: #222;
    font-size: 36px;
    line-height: 42px;
    display: flex;
    align-items: center;
    justify-content: space-between;
    flex: none;
    white-space: nowrap;
}

.pick-ma {
    width: 108px;
    padding: 0 8px 0 7px;
}

.pick-dk {
    width: 128px;
    padding: 0 5px 0 12px;
}

.pick-dk svg {
    margin-top: 22px;
}

.row .pick {
    margin-left: 5px;
    padding: 0 7px 0 3px;
}

.pick-vol {
    width: 150px;
}

.pick-fund {
    width: 186px;
}

.pick-macd {
    width: 145px;
}

.vol-row {
    height: 63px;
}

.legend-37 {
    font-size: 37px;
}

.legend-33 {
    font-size: 34px;
}

.expand {
    width: 44px;
    height: 61px;
    border: 0;
    border-radius: 12px 0 0 12px;
    background: #979797;
    display: flex;
    align-items: center;
    justify-content: center;
}

/* charts */
.board {
    display: flex;
    height: 1304px;
    padding-left: 12px;
}

.charts {
    width: 682px;
    flex: none;
}

.watermark {
    font-size: 104px;
    font-weight: 900;
    fill: #f7f7f7;
}

.axis {
    font-size: 40px;
    fill: #8b8b8b;
}

.mark {
    font-size: 40px;
    fill: #222;
}

.turn {
    font-size: 35px;
}

.sub {
    font-size: 37px;
    fill: #8b8b8b;
}

.auto {
    font-size: 31px;
    fill: #a85fe8;
    font-weight: 500;
}

.avg {
    font-size: 31px;
    fill: #fff;
}

.dates {
    display: flex;
    justify-content: space-between;
    height: 64px;
    padding: 0 6px 0 5px;
    font-size: 40px;
    line-height: 65px;
    letter-spacing: -.5px;
    color: #8b8b8b;
}

.slider {
    height: 18px;
    width: 680px;
    margin: 14px 0;
    box-sizing: border-box;
    padding: 0 5px 0 6px;
    border-radius: 9px;
    background: #f1f1f4;
    display: flex;
    justify-content: space-between;
    align-items: center;
}

.handle {
    width: 48px;
    height: 30px;
    border-radius: 8px;
    background: #fff;
    box-shadow: 0 1px 5px rgba(0, 0, 0, .18);
    display: flex;
    align-items: center;
    justify-content: center;
    gap: 6px;
}

.handle i {
    width: 2px;
    height: 16px;
    background: #777;
}

/* chip distribution */
.chips {
    margin-left: 16px;
    width: 342px;
}

.keys {
    display: flex;
    justify-content: space-between;
    height: 60px;
    padding: 2px 3px 3px 1px;
    box-sizing: border-box;
    margin-bottom: 5px;
    font-size: 29.5px;
    line-height: 56px;
    color: #666;
}

.keys span {
    display: flex;
    align-items: center;
    gap: 6px;
}

.sq {
    width: 18px;
    height: 18px;
    margin-top: 1px;
}

.green {
    background: #5cb947;
}

.red {
    background: #e84a4a;
}

.blue {
    background: #3481e0;
}

.stat {
    display: flex;
    justify-content: space-between;
    height: 47px;
    padding: 0 2px 0 1px;
    font-size: 29px;
    line-height: 48px;
    white-space: nowrap;
}

.stat span {
    color: #666;
}

.stat b {
    font-size: 30.5px;
}

.stat.tight span {
    width: 120px;
    font-size: 27px;
}

.stat.tight b {
    font-size: 30px;
    letter-spacing: -1.7px;
}

.note {
    display: flex;
    align-items: center;
    height: 70px;
    margin-top: 1px;
    padding: 0 2px 0 1px;
    font-size: 29.5px;
    line-height: 44px;
    color: #999;
}

.note svg {
    margin-left: 7px;
}

.note time {
    margin-left: auto;
}

/* banner */
.banner {
    height: 90px;
    margin: 21px 18px 17px;
    padding: 0 38px 0 30px;
    border-radius: 45px;
    background: #fdeee4;
    color: #e0580f;
    display: flex;
    align-items: center;
}

.banner p {
    margin: 0 0 5px 52px;
    width: 828px;
    font-size: 39px;
    white-space: nowrap;
}

.banner i {
    width: 2px;
    height: 36px;
    margin-right: 15px;
    background: #e37a43;
}

/* bottom actions */
.footer {
    height: 143px;
    padding-top: 7px;
    border-top: 1px solid #d3d5d9;
    background: linear-gradient(#fff 6px, #d3d5d9 6px, #d3d5d9 7px, #f7f8fb 7px);
    display: flex;
}

.index {
    width: 277px;
    display: flex;
    flex-direction: column;
    align-items: center;
    color: #e02e2e;
}

.index svg {
    margin-top: 9px;
}

.index strong {
    margin-top: 11px;
    font-size: 40px;
    font-weight: 400;
    line-height: 48px;
    letter-spacing: -.5px;
}

.index div {
    display: flex;
    align-items: center;
    width: 222px;
    margin-left: 27px;
    justify-content: space-between;
    font-size: 37px;
    line-height: 50px;
}

.index span {
    color: #666;
    font-size: 35px;
}

.action {
    width: 200.5px;
    display: flex;
    flex-direction: column;
    align-items: center;
    font-size: 35px;
    color: #666;
}

.action svg {
    margin-top: 8px;
    height: 62px;
}

.action span {
    margin-top: 15px;
    line-height: 46px;
}

.buy span {
    margin-top: 13px;
    font-size: 38px;
    font-weight: 900;
    font-style: italic;
    background: linear-gradient(90deg, #ee2b25, #ff9d55);
    background-clip: text;
    -webkit-background-clip: text;
    color: transparent;
}

.system {
    flex: 1;
    padding: 32px 0 0 286px;
    background: #fcfcfc;
    display: flex;
    gap: 181px;
}
</style>
